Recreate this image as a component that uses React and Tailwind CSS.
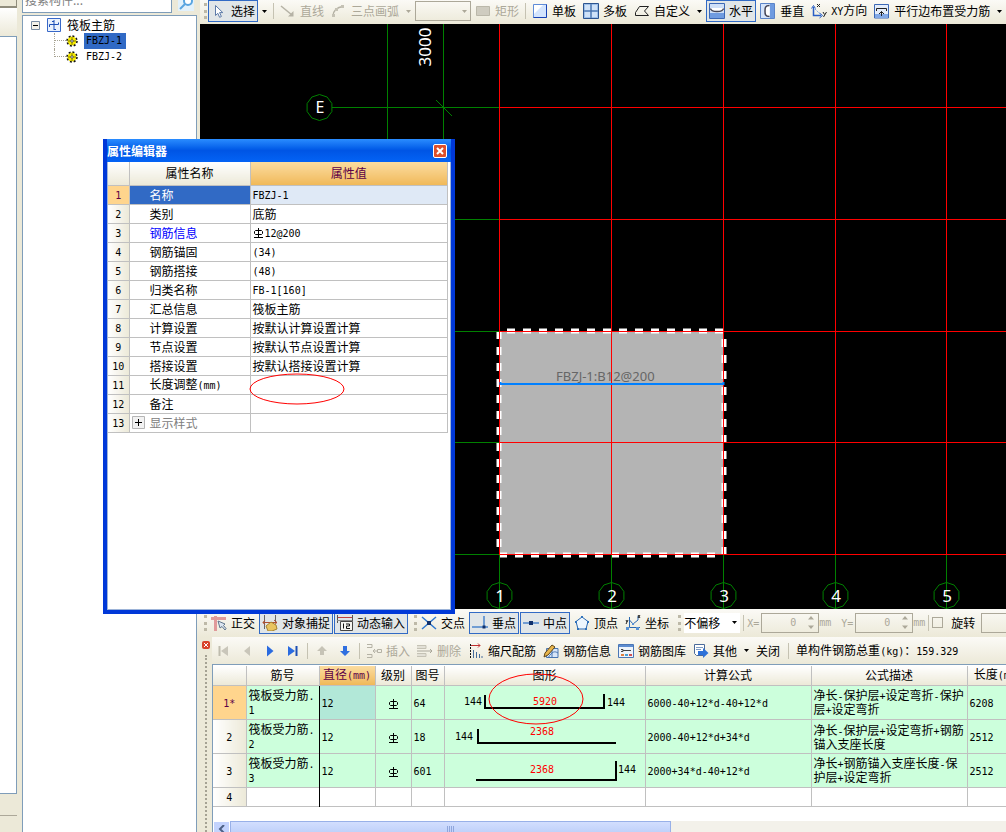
import { useState } from 'react';

const PROPERTIES = [
  { name: '名称', value: 'FBZJ-1' },
  { name: '类别', value: '底筋' },
  { name: '钢筋信息', value: '12@200', rebar: true },
  { name: '钢筋锚固', value: '(34)' },
  { name: '钢筋搭接', value: '(48)' },
  { name: '归类名称', value: 'FB-1[160]' },
  { name: '汇总信息', value: '筏板主筋' },
  { name: '计算设置', value: '按默认计算设置计算' },
  { name: '节点设置', value: '按默认节点设置计算' },
  { name: '搭接设置', value: '按默认搭接设置计算' },
  { name: '长度调整(mm)', value: '' },
  { name: '备注', value: '' },
  { name: '显示样式', value: '', group: true },
];

const BARS = [
  { name: '筏板受力筋.1', no: '64', formula: '6000-40+12*d-40+12*d', desc: '净长-保护层+设定弯折-保护层+设定弯折', length: '6208' },
  { name: '筏板受力筋.2', no: '18', formula: '2000-40+12*d+34*d', desc: '净长-保护层+设定弯折+钢筋锚入支座长度', length: '2512' },
  { name: '筏板受力筋.3', no: '601', formula: '2000+34*d-40+12*d', desc: '净长+钢筋锚入支座长度-保护层+设定弯折', length: '2512' },
];

// Latin runs are set in the mono face, one size below the Chinese text
function Txt({ children }) {
  return children.split(/([\x20-\x7e]+)/).map((part, i) =>
    i % 2 ? <span key={i} className="font-['DejaVu_Sans_Mono',monospace] text-[10px]">{part}</span> : part
  );
}

function Icon({ children, className = '' }) {
  return (
    <svg width="16" height="16" viewBox="0 0 16 16" fill="none" className={`shrink-0 ${className}`} aria-hidden="true">
      {children}
    </svg>
  );
}

function Rebar() {
  return (
    <svg width="10" height="10" viewBox="0 0 10 10" fill="none" stroke="#000" className="inline-block shrink-0" aria-label="HRB400">
      <path d="M5.5 0V10M2.5 2.5H8.5L9.5 3.5V5.5L8.5 6.5H2.5L1.5 5.5V3.5ZM1 9.5H10" />
    </svg>
  );
}

function Grip() {
  return <span className="h-4 w-[3px] shrink-0 border-l-[3px] border-dotted border-[#bdb9a8]" />;
}

function Sep() {
  return <span className="mx-0.5 h-4 w-px shrink-0 bg-[#c5c2b2]" />;
}

function Caret({ muted }) {
  return (
    <svg width="5" height="3" viewBox="0 0 5 3" className="mx-[3px] shrink-0" aria-hidden="true">
      <path d="M0 0H5L2.5 3Z" fill={muted ? '#aca899' : '#000'} />
    </svg>
  );
}

function Tool({ icon, label, active, disabled }) {
  return (
    <button
      type="button"
      disabled={disabled}
      className={`flex h-[22px] shrink-0 items-center gap-1 border px-0.5 ${active ? 'border-[#316ac5] bg-[#e1e6e8]' : 'border-transparent'} ${disabled ? 'text-[#aca899]' : ''}`}
    >
      {icon}
      {label && <span><Txt>{label}</Txt></span>}
    </button>
  );
}

const icons = {
  cursor: <Icon><path d="M4.5 2.5V12.5L6.8 10.3L8.6 14.3L10.4 13.5L8.6 9.6H11.8Z" fill="#fff" stroke="#5c7aa8" /></Icon>,
  line: <Icon><path d="M1 3L12 12" stroke="#b5b2a5" strokeWidth="1.5" /><path d="M13.5 8V13.5H8Z" fill="#b5b2a5" /></Icon>,
  arc: <Icon><path d="M2 13C2 8 6 4 12 3.5" stroke="#b5b2a5" strokeWidth="1.5" /><path d="M1 11h3v3H1zM4 5h3v3H4zM10 2h3v3h-3z" fill="#c5c2b5" /></Icon>,
  rect: <Icon><path d="M1.5 3.5H14.5V12.5H1.5Z" fill="#cfccc0" stroke="#bbb8aa" /></Icon>,
  single: (
    <Icon>
      <path d="M1.5 1.5H14.5V14.5H1.5Z" fill="#d3e4fd" stroke="#5f8cd8" />
      <path d="M14.5 1.5V14.5H1.5" stroke="#1742b5" />
      <path d="M2 2H11L2 11Z" fill="#fff" />
    </Icon>
  ),
  multi: (
    <Icon>
      <path d="M.5 .5H15.5V15.5H.5Z" fill="#9dc0ea" stroke="#2d5590" />
      <path d="M2 2H7V7H2ZM9 2H14V7H9ZM2 9H7V14H2ZM9 9H14V14H9Z" fill="#cfe2f8" />
      <path d="M8 1V15M1 8H15" stroke="#3a659f" />
    </Icon>
  ),
  custom: <Icon><path d="M5.5 3.5H14.5L10.5 8L14.5 12.5H1.5V9.5Z" stroke="#222" /></Icon>,
  horizontal: (
    <Icon>
      <path d="M.5 .5H15.5V15.5H.5Z" fill="#cfe0f8" stroke="#3c68b5" />
      <path d="M1 10H15V15H1Z" fill="#6f9be0" />
      <path d="M1.5 5V8H14.5V5" fill="#fff" />
      <path d="M1.5 5.5C2 8.5 5 8.5 8 8.5S14 8.5 14.5 5.5" stroke="#445" strokeWidth="1.5" />
    </Icon>
  ),
  vertical: (
    <Icon>
      <path d="M.5 .5H14.5V15.5H.5Z" fill="#d5e4fa" stroke="#5b84c8" />
      <path d="M10 1H14V15H10Z" fill="#6f9be0" />
      <path d="M9.5 2.5C5 2.5 5 5 5 8S5 13.5 9.5 13.5" fill="#fff" stroke="#445" strokeWidth="1.5" />
    </Icon>
  ),
  xy: (
    <Icon>
      <path d="M2.5 4V12.5H10" stroke="#2a5fc5" strokeWidth="1.5" />
      <path d="M.5 5.5L2.5 2.5L4.5 5.5M8.5 10L11.5 12.5L8.5 15" stroke="#2a5fc5" />
      <path d="M4 6L10 12" stroke="#7da4e0" strokeDasharray="2 1" />
      <path d="M6 1L9 4M9 1L6 4M12 9L13.5 11.5M15.5 9L12.5 14" stroke="#222" />
    </Icon>
  ),
  parallel: (
    <Icon>
      <path d="M.5 1.5H14.5V15H.5Z" fill="#e4edfa" stroke="#3c68b5" />
      <path d="M1 11H14V15H1Z" fill="#82a9e6" />
      <path d="M2.5 8V5.5H12.5V8M7.5 8.5V13M5 11L7.5 8.5L10 11" stroke="#222" />
    </Icon>
  ),
  ortho: (
    <Icon>
      <path d="M4.5 1V16M0 3.5H15" stroke="#e09a9a" strokeWidth="3" />
      <path d="M7 6L9 13L11 11.5L14 15L15 13.5L12.5 10.5L14 9Z" fill="#dce6f2" stroke="#61768c" />
    </Icon>
  ),
  snap: (
    <Icon>
      <path d="M2.5 0V14M13.5 0V8" stroke="#666" />
      <path d="M1 7.5H15M3 5L1 7.5L3 10M12 5L15 7.5L12 10" stroke="#b05030" />
      <path d="M4 11L9 7L14 10L15 14L10 16H6Z" fill="#e9c460" stroke="#a58330" />
    </Icon>
  ),
  dynamic: (
    <Icon>
      <path d="M.5 0V8M15.5 0V6" stroke="#555" />
      <path d="M1 2.5H15" stroke="#c04040" />
      <path d="M3.5 6.5H15.5V15.5H3.5Z" fill="#f4f4f0" stroke="#444" />
      <path d="M6.5 8.5V13.5M9 9H12.5V11H9.5V13.5H13" stroke="#111" />
      <path d="M0 5.5H15" stroke="#888" />
    </Icon>
  ),
  cross: <Icon><path d="M1 2L15 14M15 2L1 14" stroke="#2f77cf" strokeWidth="1.5" /><path d="M6 6h4v4H6z" fill="#10306b" /></Icon>,
  perp: <Icon><path d="M0 12H16M12 1V12" stroke="#4b85cc" strokeWidth="1.5" /><path d="M10.5 10.5h3v3h-3z" fill="#10306b" /></Icon>,
  mid: <Icon><path d="M0 8H16" stroke="#4b85cc" strokeWidth="1.5" /><path d="M6 6h4v4H6z" fill="#10306b" /></Icon>,
  vertex: (
    <Icon>
      <path d="M8 2L14 6.5L12 14H4L2 6.5Z" fill="#eef7fe" stroke="#2a67b0" />
      <path d="M7 1h2v2H7zM1 6h2v2H1zM13 6h2v2h-2zM3 13h2v2H3zM11 13h2v2h-2z" fill="#2f72bc" />
    </Icon>
  ),
  coord: (
    <Icon>
      <path d="M4.5 2V12.5H15M4.5 5L8 9L13 5V1" stroke="#2a67b0" />
      <path d="M1 5L2 7M3 5L1 9M13 0L15 3M15 0L13 3" stroke="#222" />
      <path d="M1 12h3v3H1zM11 12h3v3h-3zM7 8h2v2H7z" fill="#5a93d5" />
    </Icon>
  ),
  first: <Icon><path d="M3.5 3V13" stroke="#bfbcae" strokeWidth="2" /><path d="M12 3V13L5 8Z" fill="#c9c6ba" /></Icon>,
  prev: <Icon><path d="M11 3V13L5 8Z" fill="#c9c6ba" /></Icon>,
  next: <Icon><path d="M5 2.5V13.5L11.5 8Z" fill="#2a6be0" /></Icon>,
  last: <Icon><path d="M3 3V13L10 8Z" fill="#2a6be0" /><path d="M11.5 3V13" stroke="#1c4fb5" strokeWidth="2" /></Icon>,
  up: <Icon><path d="M8 3L13 8H10V12H6V8H3Z" fill="#c6c3b6" /></Icon>,
  down: <Icon><path d="M8 13L13 8H10V3H6V8H3Z" fill="#2f6fe0" /></Icon>,
  insert: <Icon><path d="M1 1.5H6V4.5H1M1 11.5H6V14.5H1M7 8H11M9 6L7 8L9 10M11.5 6.5H15.5V9.5H11.5Z" stroke="#b5b2a5" /></Icon>,
  remove: <Icon><path d="M0 2.5H9V5.5H0M0 10.5H9V13.5H0" fill="#e2e0d6" stroke="#c5c2b5" /><path d="M0 8H15M13 6L15 8L13 10" stroke="#aaa799" /></Icon>,
  scale: (
    <Icon>
      <path d="M2.5 1V16" stroke="#111" strokeDasharray="2 1" />
      <path d="M3 2.5H12M10 .5L12 2.5L10 4.5" stroke="#c03030" />
      <path d="M5.5 7V15M8.5 9V15M11.5 11V15M14 13V15" stroke="#456c9c" />
    </Icon>
  ),
  info: (
    <Icon>
      <path d="M3.5 5.5H15V14.5H3.5Z" fill="#d8e6f8" stroke="#4774b0" />
      <path d="M5 15C9 8 12 8 15 10M9 6V15" stroke="#4774b0" />
      <path d="M1 14L2 10L9 2L12 4L5 12Z" fill="#e8b64c" stroke="#604515" />
    </Icon>
  ),
  library: (
    <Icon>
      <path d="M.5 1.5H15.5V14.5H.5Z" fill="#eef4fb" stroke="#4a76b5" />
      <path d="M1 3H15" stroke="#5d8cd0" strokeWidth="2" />
      <path d="M3 6.5H5V8.5H3M5 7.5H13" stroke="#444" />
      <path d="M3 11h3v2H3z" fill="#e08040" /><path d="M7 11h3v2H7z" fill="#48a0d0" /><path d="M11 11h3v2h-3z" fill="#d05050" />
    </Icon>
  ),
  other: (
    <Icon>
      <path d="M1.5 1.5H11.5V12.5H3.5L1.5 10.5Z" fill="#fff" stroke="#4a6a9a" />
      <path d="M3 4.5H10M3 6.5H8" stroke="#7d9bc4" />
      <path d="M5 8H10V5L15.5 10L10 15V12H5Z" fill="#2f72d8" />
    </Icon>
  ),
};

function Bubble({ cx, cy }) {
  const points = Array.from({ length: 10 }, (_, i) => {
    const a = (i * Math.PI) / 5 - Math.PI / 2;
    return `${(cx + 0.5 + 13 * Math.cos(a)).toFixed(1)},${(cy + 0.5 + 13 * Math.sin(a)).toFixed(1)}`;
  });
  return <polygon points={points.join(' ')} fill="none" stroke="#008000" />;
}

function ModelView() {
  const columns = [299, 411, 523, 635, 746];
  return (
    <svg className="absolute inset-0 h-full w-full font-['Noto_Sans',sans-serif]" aria-label="筏板平面图">
      <rect x="299" y="307" width="225" height="224" fill="#b4b4b4" />
      <path d="M307 307H524M299 531H524" stroke="#fff" strokeWidth="5" strokeDasharray="8 8" />
      <path d="M299 307V531M524 315V531" stroke="#fff" strokeWidth="5" strokeDasharray="8 8" />
      <text x="356" y="357" fontSize="13" fill="#666">FBZJ-1:B12@200</text>
      <g shapeRendering="crispEdges" stroke="#008000">
        <path d="M187.5 0V600M243.5 0V600M132 83.5H299M0 195.5H299M0 307.5H299M0 418.5H299M0 530.5H299" />
        {columns.map((x) => <path key={x} d={`M${x}.5 530V585`} />)}
        <path d="M236 76L252 92" />
      </g>
      <g shapeRendering="crispEdges" stroke="#f00">
        {[83, 195, 307, 418, 530].map((y) => <line key={y} x1="299" x2="100%" y1={y + 0.5} y2={y + 0.5} />)}
        {columns.map((x) => <path key={x} d={`M${x}.5 0V530`} />)}
      </g>
      <path d="M300.5 358V360H523.5V358" fill="none" stroke="#0080ff" strokeWidth="2" />
      <g fill="#fff" fontSize="17" textAnchor="middle">
        <Bubble cx={119} cy={83} />
        <text x="120" y="89" fontSize="16">E</text>
        {columns.map((x, i) => (
          <g key={x}>
            <Bubble cx={x} cy={571} />
            <text x={x + 1} y="578">{i + 1}</text>
          </g>
        ))}
        <text transform="translate(231 23) rotate(-90)">3000</text>
      </g>
    </svg>
  );
}

function PropertyEditor() {
  return (
    <section className="absolute top-[139px] left-[103px] flex h-[475px] w-[352px] flex-col border-x-4 border-b-4 border-[#0038d8] bg-[#0038d8]" aria-label="属性编辑器">
      <header className="flex h-[23px] items-center justify-between bg-linear-to-b from-[#2a8cff] via-[#0055e5] to-[#0463f5] pr-1 font-bold text-white">
        属性编辑器
        <button type="button" aria-label="关闭" className="flex size-[14px] items-center justify-center rounded-xs border border-white bg-[#dd4f2c]">
          <svg width="8" height="8" viewBox="0 0 8 8" stroke="#fff" strokeWidth="2"><path d="M1 1L7 7M7 1L1 7" /></svg>
        </button>
      </header>
      <div className="relative flex-1 border-x border-b border-[#9db4d8] bg-white">
        <table className="w-[340px] table-fixed border-collapse">
          <colgroup>
            <col className="w-[21px]" />
            <col className="w-[121px]" />
            <col />
          </colgroup>
          <thead>
            <tr className="h-[23px] border-b border-[#c0c0c0]">
              <th className="border-r border-[#c0c0c0] bg-linear-to-b from-white to-[#ece9d8]" />
              <th className="border-r border-[#c0c0c0] bg-linear-to-b from-white to-[#ece9d8] font-normal">属性名称</th>
              <th className="border-r border-[#c0c0c0] bg-linear-to-b from-[#fbdc9f] to-[#f0b958] font-normal text-[#5c0047]">属性值</th>
            </tr>
          </thead>
          <tbody>
            {PROPERTIES.map((p, i) => (
              <tr key={p.name} className="h-[19px] border-b border-[#c0c0c0]">
                <td className={`border-r border-[#c0c0c0] text-center ${i === 0 ? 'bg-[#ffd58d] text-[#5c0047]' : 'bg-linear-to-r from-white to-[#ece9d8]'}`}>
                  <Txt>{String(i + 1)}</Txt>
                </td>
                <td className={`border-r border-[#c0c0c0] ${i === 0 ? 'bg-[#316ac5] text-white' : ''} ${p.rebar ? 'text-[#0000ff]' : ''} ${p.group ? 'text-[#808080]' : ''}`}>
                  <div className="flex items-center">
                    <span className="flex w-5 pl-0.5">
                      {p.group && (
                        <svg width="13" height="13" viewBox="0 0 13 13" stroke="#000" fill="none">
                          <path d="M.5 .5H12.5V12.5H.5Z" stroke="#b5b5b5" fill="#f2f2f2" /><path d="M3 6.5H10M6.5 3V10" />
                        </svg>
                      )}
                    </span>
                    <span><Txt>{p.name}</Txt></span>
                  </div>
                </td>
                <td className={`border-r border-[#c0c0c0] pl-0.5 ${i === 0 ? 'bg-[#dfe9f6]' : ''}`}>
                  <div className="flex items-center gap-0.5">
                    {p.rebar && <Rebar />}
                    <span><Txt>{p.value}</Txt></span>
                  </div>
                </td>
              </tr>
            ))}
          </tbody>
        </table>
        <svg width="98" height="32" className="absolute top-[211px] left-[140px]" fill="none" stroke="#f00">
          <ellipse cx="49" cy="16" rx="47" ry="15" />
        </svg>
      </div>
    </section>
  );
}

function Shape({ row }) {
  return (
    <svg width="200" height="33" className="relative z-10 block overflow-visible font-['DejaVu_Sans_Mono',monospace]" fontSize="10">
      {row === 0 && (
        <>
          <path d="M40 9V22H159V8" fill="none" stroke="#000" strokeWidth="2" />
          <text x="19" y="19">144</text>
          <text x="162" y="20">144</text>
          <text x="100" y="19" textAnchor="middle" fill="#f00">5920</text>
          <ellipse cx="91" cy="13" rx="47" ry="25" fill="none" stroke="#f00" />
        </>
      )}
      {row === 1 && (
        <>
          <path d="M33 9V23H171" fill="none" stroke="#000" strokeWidth="2" />
          <text x="10" y="20">144</text>
          <text x="97" y="15" textAnchor="middle" fill="#f00">2368</text>
        </>
      )}
      {row === 2 && (
        <>
          <path d="M31 26H171V7" fill="none" stroke="#000" strokeWidth="2" />
          <text x="173" y="19">144</text>
          <text x="97" y="19" textAnchor="middle" fill="#f00">2368</text>
        </>
      )}
    </svg>
  );
}

const HEADS = ['', '筋号', '直径(mm)', '级别', '图号', '图形', '计算公式', '公式描述', '长度(mm)'];

function BarTable() {
  const cell = 'border-r border-[#c0c0c0] pl-0.5';
  return (
    <table className="w-[816px] min-w-full table-fixed border-collapse leading-3">
      <colgroup>
        <col className="w-[33px]" />
        <col className="w-[73px]" />
        <col className="w-[56px]" />
        <col className="w-[36px]" />
        <col className="w-[33px]" />
        <col className="w-[201px]" />
        <col className="w-[166px]" />
        <col className="w-[156px]" />
        <col />
      </colgroup>
      <thead>
        <tr className="h-5 border-b border-[#c0c0c0]">
          {HEADS.map((h, i) => (
            <th key={i} className={`border-r border-[#c0c0c0] font-normal whitespace-nowrap ${i === 2 ? 'bg-linear-to-b from-[#fbdc9f] to-[#f0b958] text-[#5c0047]' : 'bg-linear-to-b from-white to-[#ece9d8]'}`}>
              <Txt>{h}</Txt>
            </th>
          ))}
        </tr>
      </thead>
      <tbody>
        {BARS.map((b, i) => (
          <tr key={b.name} className="h-[34px] border-b border-[#c0c0c0] bg-[#ccffdc]">
            <td className={`border-r border-[#c0c0c0] text-center ${i === 0 ? 'bg-[#ffd58d] text-[#5c0047]' : 'bg-linear-to-r from-white to-[#ece9d8]'}`}>
              <Txt>{i === 0 ? '1*' : String(i + 1)}</Txt>
            </td>
            <td className="border-r border-black pl-0.5 break-all"><Txt>{b.name}</Txt></td>
            <td className={`${cell} ${i === 0 ? 'bg-[#b2e8d8]' : ''}`}><Txt>12</Txt></td>
            <td className="border-r border-[#c0c0c0] text-center"><Rebar /></td>
            <td className={cell}><Txt>{b.no}</Txt></td>
            <td className="border-r border-[#c0c0c0] p-0"><Shape row={i} /></td>
            <td className={cell}><Txt>{b.formula}</Txt></td>
            <td className={`${cell} break-all`}><Txt>{b.desc}</Txt></td>
            <td className={cell}><Txt>{b.length}</Txt></td>
          </tr>
        ))}
        <tr className="h-[19px] border-b border-[#c0c0c0]">
          <td className="border-r border-[#c0c0c0] bg-linear-to-r from-white to-[#ece9d8] text-center"><Txt>4</Txt></td>
          <td className="border-r border-black" />
          {HEADS.slice(2).map((h) => <td key={h} className={cell} />)}
        </tr>
      </tbody>
    </table>
  );
}

function Spin({ label, axis }) {
  return (
    <label className="flex shrink-0 items-center text-[#aca899]">
      {axis && <span className="mr-0.5"><Txt>{axis}</Txt></span>}
      <span className="flex h-5 w-[58px] items-center border border-[#aca899] pr-1">
        <input aria-label={label} disabled defaultValue="0" className="w-10 min-w-0 flex-1 pr-3 text-right font-['DejaVu_Sans_Mono',monospace] text-[10px]" />
        <svg width="6" height="13" viewBox="0 0 6 13" fill="#aca899"><path d="M0 3.5L3 0L6 3.5ZM0 9.5L3 13L6 9.5Z" /></svg>
      </span>
      {axis && <Txt>mm</Txt>}
    </label>
  );
}

function TreePanel() {
  const [selected, setSelected] = useState('FBZJ-1');
  return (
    <aside className="flex w-[175px] shrink-0 flex-col">
      <div className="flex h-[15px] items-end overflow-hidden">
        <input aria-label="搜索构件" placeholder="搜索构件..." className="mb-0.5 h-7 w-[150px] border border-[#7f9db9] bg-white px-0.5 placeholder:text-[#808080]" />
        <button type="button" aria-label="搜索" className="mb-1 ml-1.5 flex size-4 items-center justify-center bg-[#e2f1fb]">
          <svg width="14" height="14" viewBox="0 0 14 14" fill="none" stroke="#5aa5e0" strokeWidth="2"><circle cx="9" cy="5" r="4" fill="#fff" /><path d="M6 8L1 13" /></svg>
        </button>
      </div>
      <div className="flex-1 border-x border-t border-[#7f9db9] bg-white pt-px pl-2">
        <div className="flex h-4 items-center">
          <svg width="9" height="9" viewBox="0 0 9 9" fill="none"><path d="M.5 .5H8.5V8.5H.5Z" fill="#f4f2ea" stroke="#7b8ea5" /><path d="M2 4.5H7" stroke="#000" /></svg>
          <svg width="14" height="14" viewBox="0 0 14 14" fill="none" className="mr-1.5 ml-[7px]">
            <path d="M.5 .5H13.5V13.5H.5Z" fill="#eaf2fd" stroke="#3868c8" />
            <path d="M2.5 9V6.5H11.5V4.5M7 2V12M5 3.5H7M7 11.5H9" stroke="#1c50b8" />
          </svg>
          筏板主筋
        </div>
        {['FBZJ-1', 'FBZJ-2'].map((name, i) => (
          <div key={name} className="flex h-4 items-center pl-[23px]">
            <span className={`w-3 border-l border-dotted border-[#a8a494] ${i === 1 ? 'mb-2 h-2 border-b' : 'h-full'}`}>
              {i === 0 && <span className="block h-1/2 border-b border-dotted border-[#a8a494]" />}
            </span>
            <svg width="12" height="12" viewBox="0 0 12 12" fill="none" className="mr-1.5">
              <circle cx="6" cy="6" r="4.5" fill="#f8ec00" />
              <circle cx="6" cy="6" r="5" stroke="#111" strokeWidth="1.5" strokeDasharray="2 1.9" />
              <path d="M6 2V4M6 8V10M2 6H4M8 6H10" stroke="#554e00" strokeWidth=".7" />
              <circle cx="6" cy="6" r="1.3" fill="#fff" stroke="#222" strokeWidth=".8" />
            </svg>
            <button
              type="button"
              onClick={() => setSelected(name)}
              className={`flex h-4 items-center pr-1 pl-0.5 ${selected === name ? 'bg-[#316ac5]' : ''}`}
            >
              <Txt>{name}</Txt>
            </button>
          </div>
        ))}
      </div>
    </aside>
  );
}

export default function App() {
  const bar = 'flex shrink-0 items-center gap-px overflow-hidden whitespace-nowrap bg-linear-to-b from-[#fbfaf6] to-[#ece9d8]';
  return (
    <div className="relative flex h-screen overflow-hidden bg-[#ece9d8] font-['Noto_Sans_CJK_SC',sans-serif] text-[12px] leading-4 text-black">
      <div className="mr-[5px] flex w-[17px] shrink-0 flex-col">
        <div className="h-2 border-r border-b-2 border-[#8f8c7c] bg-[#ece9d8]" />
        <div className="h-7 bg-linear-to-b from-white to-[#ece9d8]" />
        <div className="flex-1 border-y border-r border-[#7f9db9] bg-white" />
        <div className="mb-4 h-[22px] border-b border-[#aca899]" />
      </div>

      <TreePanel />

      <main className="flex min-w-0 flex-1 flex-col">
        <div className={`${bar} ml-[3px] h-6 pb-0.5 pl-1`} role="toolbar" aria-label="绘图">
          <Grip />
          <Tool icon={icons.cursor} label="选择" active />
          <Caret />
          <Sep />
          <Tool icon={icons.line} label="直线" disabled />
          <Tool icon={icons.arc} label="三点画弧" disabled />
          <Caret muted />
          <div className="grid h-5 w-14 shrink-0 items-center justify-items-end border border-[#aca899]">
            <select aria-label="画弧方式" disabled className="col-start-1 row-start-1 h-full w-full appearance-none" />
            <span className="col-start-1 row-start-1 flex"><Caret muted /></span>
          </div>
          <Tool icon={icons.rect} label="矩形" disabled />
          <Sep />
          <Tool icon={icons.single} label="单板" />
          <Tool icon={icons.multi} label="多板" />
          <Tool icon={icons.custom} label="自定义" />
          <Caret />
          <Tool icon={icons.horizontal} label="水平" active />
          <Tool icon={icons.vertical} label="垂直" />
          <Tool icon={icons.xy} label="XY方向" />
          <Tool icon={icons.parallel} label="平行边布置受力筋" />
          <Caret />
        </div>

        <div className="relative ml-[3px] min-h-0 flex-1 bg-black">
          <ModelView />
        </div>

        <div className={`${bar} h-7 pl-[7px]`} role="toolbar" aria-label="捕捉">
          <Grip />
          <Tool icon={icons.ortho} label="正交" />
          <Tool icon={icons.snap} label="对象捕捉" active />
          <Tool icon={icons.dynamic} label="动态输入" active />
          <span className="w-1 shrink-0" />
          <Grip />
          <Tool icon={icons.cross} label="交点" />
          <Tool icon={icons.perp} label="垂点" active />
          <Tool icon={icons.mid} label="中点" active />
          <Tool icon={icons.vertex} label="顶点" />
          <Tool icon={icons.coord} label="坐标" />
          <span className="w-1 shrink-0" />
          <Grip />
          <div className="ml-0.5 grid h-5 w-14 shrink-0 items-center justify-items-end bg-white">
            <select aria-label="偏移方式" className="col-start-1 row-start-1 w-full appearance-none">
              <option>不偏移</option>
            </select>
            <span className="pointer-events-none col-start-1 row-start-1 flex"><Caret /></span>
          </div>
          <Sep />
          <Spin label="X 偏移" axis="X=" />
          <span className="w-2 shrink-0" />
          <Spin label="Y 偏移" axis="Y=" />
          <Sep />
          <label className="flex shrink-0 items-center gap-2">
            <input type="checkbox" className="size-[11px] appearance-none border border-[#aca899]" />
            旋转
          </label>
          <span className="w-1 shrink-0" />
          <Spin label="旋转角度" />
        </div>

        <div className="flex shrink-0">
          <div className="flex w-[15px] shrink-0 flex-col items-center pt-1 pl-0.5">
            <button type="button" aria-label="关闭面板" className="flex size-2 items-center justify-center rounded-xs bg-[#d8432a]">
              <svg width="6" height="6" viewBox="0 0 6 6" stroke="#fff"><path d="M1 1L5 5M5 1L1 5" /></svg>
            </button>
            <span className="mt-1.5 flex-1 border-l-2 border-dotted border-[#a5a293]" />
          </div>
          <div className="min-w-0 flex-1">
            <div className={`${bar} h-[27px] pt-px pl-px`} role="toolbar" aria-label="钢筋">
              <Tool icon={icons.first} disabled />
              <Tool icon={icons.prev} disabled />
              <Tool icon={icons.next} />
              <Tool icon={icons.last} />
              <Sep />
              <Tool icon={icons.up} disabled />
              <Tool icon={icons.down} />
              <Sep />
              <Tool icon={icons.insert} label="插入" disabled />
              <Tool icon={icons.remove} label="删除" disabled />
              <Tool icon={icons.scale} label="缩尺配筋" />
              <Tool icon={icons.info} label="钢筋信息" />
              <Tool icon={icons.library} label="钢筋图库" />
              <Tool icon={icons.other} label="其他" />
              <Caret />
              <Tool label="关闭" />
              <span className="w-px shrink-0" />
              <Sep />
              <span className="pl-1"><Txt>单构件钢筋总重(kg)：159.329</Txt></span>
            </div>
            <div className="overflow-hidden border-t border-l border-[#7f9db9] bg-white pt-px">
              <BarTable />
              <div className="mt-3.5 flex h-[11px] items-start overflow-hidden bg-[#f3f1ea]">
                <button type="button" aria-label="向左滚动" className="flex h-4 w-[17px] items-center justify-center border border-white bg-[#c3d3fd]">
                  <svg width="8" height="8" viewBox="0 0 8 8" fill="none" stroke="#4d6185" strokeWidth="2"><path d="M6 0L2 4L6 8" /></svg>
                </button>
                <div className="flex h-4 w-[441px] items-center justify-center border border-[#98b0e8] bg-linear-to-b from-[#d2defe] to-[#b9ccf8]">
                  <svg width="8" height="6" stroke="#8fa6dc"><path d="M.5 0V6M2.5 0V6M4.5 0V6M6.5 0V6" /></svg>
                </div>
              </div>
            </div>
          </div>
        </div>
      </main>

      <PropertyEditor />
    </div>
  );
}
